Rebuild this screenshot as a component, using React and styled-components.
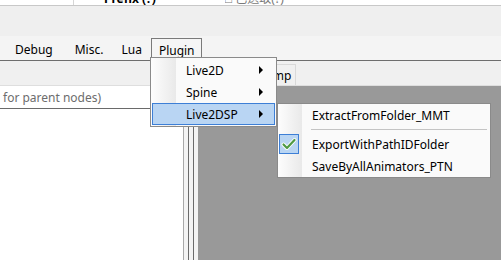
import React from 'react';
import styled, { createGlobalStyle } from 'styled-components';

const Global = createGlobalStyle`
	html, body { margin: 0; padding: 0; }
	body {
		font-family: "Noto Sans", "Liberation Sans", "Noto Sans CJK TC", sans-serif;
		font-size: 12px;
		color: #000;
		background: #f0f0f0;
	}
`;

const Window = styled.div`
	position: relative;
	width: 501px;
	height: 260px;
	overflow: hidden;
	background: #f0f0f0;
	display: flex;
	flex-direction: column;
`;

const TopStrip = styled.div`
	height: 5px;
	background: #fff;
	border-bottom: 1px solid #c8c8c8;
	display: flex;
	overflow: hidden;
`;

const TopCell = styled.div`
	width: ${p => p.w}px;
	border-right: ${p => (p.line ? '1px solid #d6d6d6' : 'none')};
	display: flex;
	align-items: flex-end;
	padding-left: ${p => p.pad || 0}px;
	overflow: hidden;
	font-weight: ${p => (p.bold ? 700 : 400)};
	color: ${p => (p.muted ? '#7a7a7a' : '#000')};
	white-space: nowrap;
	line-height: 14px;
	margin-bottom: -1px;
`;

const Gap = styled.div`
	height: 30px;
	background: #efefef;
`;

const MenuBar = styled.div`
	height: 24px;
	background: #f4f4f4;
	border-bottom: 1px solid #6e6e6e;
	display: flex;
	align-items: flex-end;
	padding-left: 5px;
`;

const MenuItem = styled.div`
	padding: 0 ${p => p.pr ?? 9}px 0 ${p => p.pl ?? 9}px;
	display: flex;
	align-items: center;
	box-sizing: border-box;
	border: 1px solid ${p => (p.open ? '#7a7a7a' : 'transparent')};
	border-bottom: none;
	background: ${p => (p.open ? '#f5f5f5' : 'transparent')};
	margin-bottom: ${p => (p.open ? '-1px' : '0')};
	height: ${p => (p.open ? '23px' : '22px')};
	position: relative;
	z-index: 2;
`;

const Body = styled.div`
	flex: 1;
	display: flex;
	min-height: 0;
`;

const LeftPanel = styled.div`
	width: 183px;
	display: flex;
	flex-direction: column;
	border-right: 1px solid #a9a9a9;
`;

const TabStrip = styled.div`
	height: 24px;
	background: #f0f0f0;
	border-bottom: 1px solid #dedede;
	display: flex;
	align-items: flex-end;
`;

const Tab = styled.div`
	height: 21px;
	box-sizing: border-box;
	padding: 0 4px;
	display: flex;
	align-items: center;
	border: 1px solid #d9d9d9;
	border-bottom: none;
	background: #f0f0f0;
`;

const Filter = styled.div`
	height: 22px;
	background: #fff;
	border-bottom: 1px solid #6a6a6a;
	display: flex;
	align-items: center;
	padding-left: 3px;
	color: #6d6d6d;
	white-space: nowrap;
	overflow: hidden;
`;

const Tree = styled.div`
	flex: 1;
	background: #fff;
`;

const Splitter = styled.div`
	width: 14px;
	display: flex;
	justify-content: space-between;
	padding: 0 4px;
	box-sizing: border-box;
	background: #f4f4f4;
`;

const SplitLine = styled.div`
	width: 1px;
	background: #6b6b6b;
`;

const RightPanel = styled.div`
	flex: 1;
	display: flex;
	flex-direction: column;
`;

const Canvas = styled.div`
	flex: 1;
	background: #999999;
`;

const Popup = styled.div`
	position: absolute;
	left: ${p => p.x}px;
	top: ${p => p.y}px;
	width: ${p => p.w}px;
	box-sizing: border-box;
	border: 1px solid #8a8a8a;
	padding: ${p => p.pad}px 1px;
	background:
		linear-gradient(to right, #fdfdfd 0, #e9e9e9 ${p => p.col}px, #fafafa ${p => p.col}px) no-repeat;
	z-index: 5;
`;

const PopupItem = styled.div`
	height: 22px;
	box-sizing: border-box;
	display: flex;
	align-items: center;
	padding-left: ${p => p.indent}px;
	padding-right: 11px;
	border: 1px solid ${p => (p.active ? '#3d7fd6' : 'transparent')};
	background: ${p => (p.active ? '#b9d5f3' : 'transparent')};
	white-space: nowrap;
	position: relative;
`;

const Label = styled.span`
	flex: 1;
`;

const Arrow = styled.span`
	width: 0;
	height: 0;
	border-top: 4px solid transparent;
	border-bottom: 4px solid transparent;
	border-left: 4px solid #000;
`;

const Separator = styled.div`
	height: 7px;
	display: flex;
	align-items: center;
	padding-left: 32px;
	padding-right: 2px;
	&::after {
		content: '';
		flex: 1;
		height: 1px;
		background: #c4c4c4;
	}
`;

const CheckBox = styled.span`
	position: absolute;
	left: -1px;
	top: 0;
	width: 20px;
	height: 20px;
	box-sizing: border-box;
	border: 1px solid #3d7fd6;
	background: #b9d5f3;
	display: flex;
	align-items: center;
	justify-content: center;
`;

function Check() {
	return (
		<svg width="16" height="14" viewBox="0 0 16 14">
			<polyline points="2.5,7.5 6,11 13.5,3" fill="none" stroke="#fff" strokeWidth="4" strokeLinejoin="round" strokeLinecap="round" />
			<polyline points="2.5,7.5 6,11 13.5,3" fill="none" stroke="#4f9a45" strokeWidth="2.2" strokeLinejoin="round" strokeLinecap="round" />
		</svg>
	);
}

export default function App() {
	return (
		<>
			<Global />
			<Window>
				<TopStrip>
					<TopCell w={73} line />
					<TopCell w={121} pad={30} bold>Prefix (?)</TopCell>
					<TopCell w={120} muted>□ 已選取(?)</TopCell>
				</TopStrip>
				<Gap />
				<MenuBar>
					<MenuItem>Debug</MenuItem>
					<MenuItem pl={11}>Misc.</MenuItem>
					<MenuItem pl={7} pr={8}>Lua</MenuItem>
					<MenuItem open pl={7} pr={6}>Plugin</MenuItem>
				</MenuBar>
				<Body>
					<LeftPanel>
						<TabStrip />
						<Filter>for parent nodes)</Filter>
						<Tree />
					</LeftPanel>
					<Splitter>
						<SplitLine />
						<SplitLine />
					</Splitter>
					<RightPanel>
						<TabStrip>
							<Tab>Preview</Tab>
							<Tab>Dump</Tab>
						</TabStrip>
						<Canvas />
					</RightPanel>
				</Body>

				<Popup x={150} y={57} w={127} pad={1} col={25}>
					<PopupItem indent={33}><Label>Live2D</Label><Arrow /></PopupItem>
					<PopupItem indent={33}><Label>Spine</Label><Arrow /></PopupItem>
					<PopupItem indent={33} active><Label>Live2DSP</Label><Arrow /></PopupItem>
				</Popup>

				<Popup x={277} y={103} w={214} pad={0} col={24}>
					<PopupItem indent={32}><Label>ExtractFromFolder_MMT</Label></PopupItem>
					<Separator />
					<PopupItem indent={32}>
						<CheckBox><Check /></CheckBox>
						<Label>ExportWithPathIDFolder</Label>
					</PopupItem>
					<PopupItem indent={32}><Label>SaveByAllAnimators_PTN</Label></PopupItem>
				</Popup>
			</Window>
		</>
	);
}
